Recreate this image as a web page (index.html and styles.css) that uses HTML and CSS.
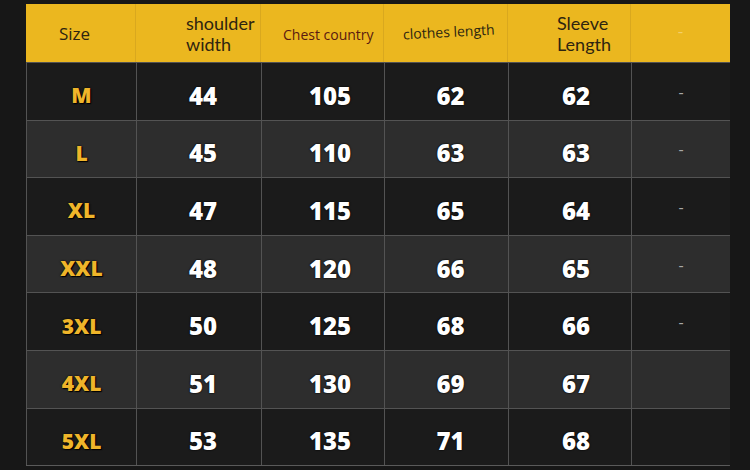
FILE: index.html
```html
<!DOCTYPE html>
<html>
<head>
<meta charset="utf-8">
<link rel="stylesheet" href="styles.css">
</head>
<body>
<div class="page">
  <div class="table">
    <div class="hd c-size">Size</div>
    <div class="hd c-shoulder">shoulder<br>width</div>
    <div class="hd c-chest">Chest country</div>
    <div class="hd c-clothes"><span>clothes length</span></div>
    <div class="hd c-sleeve">Sleeve<br>Length</div>
    <div class="hd c-extra">-</div>

    <div class="cell sz">M</div><div class="cell num">44</div><div class="cell num n3">105</div><div class="cell num">62</div><div class="cell num n5">62</div><div class="cell dash">-</div>
    <div class="cell alt sz">L</div><div class="cell alt num">45</div><div class="cell alt num n3">110</div><div class="cell alt num">63</div><div class="cell alt num n5">63</div><div class="cell alt dash">-</div>
    <div class="cell sz">XL</div><div class="cell num">47</div><div class="cell num n3">115</div><div class="cell num">65</div><div class="cell num n5">64</div><div class="cell dash">-</div>
    <div class="cell alt sz">XXL</div><div class="cell alt num">48</div><div class="cell alt num n3">120</div><div class="cell alt num">66</div><div class="cell alt num n5">65</div><div class="cell alt dash">-</div>
    <div class="cell sz">3XL</div><div class="cell num">50</div><div class="cell num n3">125</div><div class="cell num">68</div><div class="cell num n5">66</div><div class="cell dash">-</div>
    <div class="cell alt sz">4XL</div><div class="cell alt num">51</div><div class="cell alt num n3">130</div><div class="cell alt num">69</div><div class="cell alt num n5">67</div><div class="cell alt dash"></div>
    <div class="cell sz">5XL</div><div class="cell num">53</div><div class="cell num n3">135</div><div class="cell num">71</div><div class="cell num n5">68</div><div class="cell dash"></div>
  </div>
</div>
</body>
</html>
```

FILE: styles.css
```css
html, body {
  margin: 0;
  padding: 0;
  background: #161616;
}
.page {
  width: 750px;
  height: 470px;
  padding: 4px 0 0 26px;
  box-sizing: border-box;
  background: #171717;
}
.table {
  display: grid;
  grid-template-columns: 110px 125px 123px 124px 123px 99px;
  grid-template-rows: 58px repeat(7, 57.6px);
  width: 704px;
  border-right: 1.5px solid #555;
  border-bottom: 1.5px solid #5a5a5a;
  box-sizing: border-box;
  font-family: "Open Sans", "Noto Sans", sans-serif;
}
.hd {
  background: #ebb71f;
  color: #2e2410;
  font-size: 17px;
  line-height: 19px;
  display: flex;
  align-items: center;
  border-right: 1px solid #d9a81e;
  box-sizing: border-box;
}
.c-size { justify-content: center; padding-right: 12px; padding-top: 1px; }
.c-shoulder, .c-sleeve {
  font-family: Lato, "Open Sans", sans-serif;
  font-size: 18px;
  line-height: 21px;
  padding-top: 2px;
}
.c-shoulder { padding-left: 50px; }
.c-sleeve { padding-left: 49px; }
.c-chest { font-size: 14px; padding-left: 22px; color: #5a1a10; padding-top: 2px; }
.c-clothes { font-size: 14px; padding-left: 19px; padding-bottom: 4px; color: #2a2410; }
.c-clothes span { display: inline-block; transform: rotate(-3deg); }
.c-extra { justify-content: center; color: #f3cf6a; border-right: none; padding-bottom: 6px; }
.cell {
  background: #1b1b1b;
  border-top: 1.5px solid #535353;
  border-left: 1.5px solid #535353;
  box-sizing: border-box;
  display: flex;
  align-items: center;
  justify-content: center;
}
.cell.alt { background: #2d2d2d; }
.sz {
  color: #efb52a;
  font-size: 21px;
  font-weight: 800;
  padding-top: 8px;
  text-shadow: 0 0 2px #000, 1px 1px 1px #000;
}
.num {
  color: #fff;
  font-size: 24px;
  font-weight: 800;
  padding-top: 8px;
  padding-left: 8px;
  text-shadow: 0 0 2px #000, 0 0 1px #000;
}
.n3 { padding-left: 14px; }
.n5 { padding-left: 12px; }
.dash {
  color: #a8a8a8;
  font-size: 16px;
  padding-top: 1px;
}
```
